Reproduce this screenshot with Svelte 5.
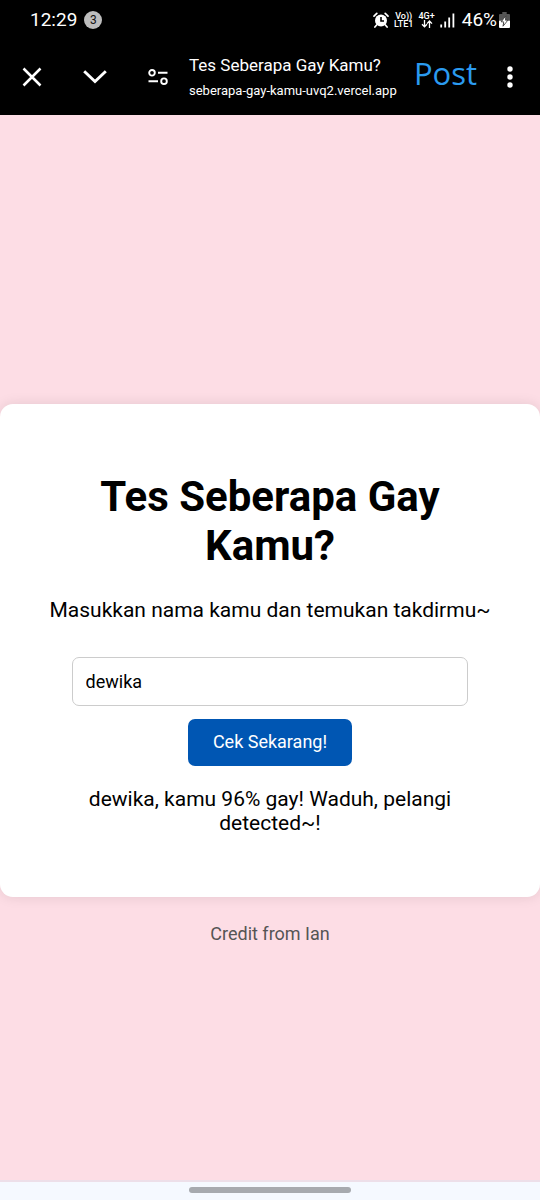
<script>
  let name = $state('dewika');
  let result = $state('dewika, kamu 96% gay! Waduh, pelangi detected~!');

  function check(event) {
    event.preventDefault();
    const who = name.trim();
    if (who) result = `${who}, kamu 96% gay! Waduh, pelangi detected~!`;
  }
</script>

<div class="screen">
  <header>
    <div class="status">
      <span class="clock">12:29</span>
      <span class="count">3</span>
      <div class="signals">
        <svg width="16" height="16" viewBox="0 0 16 16" aria-hidden="true">
          <circle cx="8" cy="8.5" r="6" fill="#fff" />
          <path d="M1 4.2 3.8 1.4M12.2 1.4 15 4.2M3.6 13 1.9 15M12.4 13l1.7 2" stroke="#fff" stroke-width="1.7" stroke-linecap="round" />
          <path d="M8 5v4h3" fill="none" stroke="#000" stroke-width="1.6" />
        </svg>
        <span class="stack"><span>Vo))</span><span>LTE1</span></span>
        <span class="stack">
          <span>4G+</span>
          <svg width="12" height="8" viewBox="0 0 12 8" aria-hidden="true">
            <path d="M3.5 0v6.5M1 4.2l2.5 2.6L6 4.2M8.5 8V1.2M6 3.6 8.5 1 11 3.6" fill="none" stroke="#fff" stroke-width="1.3" />
          </svg>
        </span>
        <svg width="15" height="16" viewBox="0 0 15 16" aria-hidden="true">
          <path d="M1.2 15.5v-3M5.2 15.5v-6M9.2 15.5v-10M13.4 15.5v-14" stroke="#fff" stroke-width="1.8" />
        </svg>
        <span class="percent">46%</span>
        <svg width="11" height="16" viewBox="0 0 11 16" aria-hidden="true">
          <path d="M3.3 0h4.4v2H10a1 1 0 0 1 1 1v5H0V3a1 1 0 0 1 1-1h2.3z" fill="#555" />
          <path d="M0 8.5h11V15a1 1 0 0 1-1 1H1a1 1 0 0 1-1-1z" fill="#fff" />
          <path d="M7 3.8 2.2 9.8h2.6L4 14.2l4.8-6H6.2z" fill="#fff" stroke="#444" stroke-width="1" />
          <path d="M6.4 5.4 3.4 9.2h2.3l-.6 2.8 2.6-3.3H5.5z" fill="#fff" />
        </svg>
      </div>
    </div>

    <div class="toolbar">
      <button class="icon" aria-label="Tutup">
        <svg width="20" height="20" viewBox="0 0 20 20"><path d="m1.5 1.5 17 17M18.500 1.500l-17 17" fill="none" stroke="#fff" stroke-width="2.5" /></svg>
      </button>
      <button class="icon chevron" aria-label="Perkecil">
        <svg width="24" height="14" viewBox="0 0 24 14"><path d="m1.2 1.2 10.8 10.4L22.8 1.2" fill="none" stroke="#fff" stroke-width="2.9" /></svg>
      </button>
      <button class="icon" aria-label="Info situs">
        <svg width="20" height="16" viewBox="0 0 20 16">
          <g fill="none" stroke="#fff" stroke-width="1.9">
            <circle cx="4" cy="3.8" r="2.8" /><path d="M10 3.8h9.500M.5 12.200H10" /><circle cx="16" cy="12.2" r="2.8" />
          </g>
        </svg>
      </button>
      <div class="site">
        <span class="site-title">Tes Seberapa Gay Kamu?</span>
        <span class="site-url">seberapa-gay-kamu-uvq2.vercel.app</span>
      </div>
      <button class="post">Post</button>
      <button class="icon menu" aria-label="Menu">
        <svg width="6" height="22" viewBox="0 0 6 22"><g fill="#fff"><circle cx="3" cy="3" r="2.7" /><circle cx="3" cy="11" r="2.7" /><circle cx="3" cy="19" r="2.7" /></g></svg>
      </button>
    </div>
  </header>

  <main>
    <section class="card">
      <h1>Tes Seberapa Gay Kamu?</h1>
      <p><label for="name">Masukkan nama kamu dan temukan takdirmu~</label></p>
      <form onsubmit={check}>
        <input id="name" type="text" autocomplete="off" bind:value={name} />
        <button class="check" type="submit">Cek Sekarang!</button>
      </form>
      <p class="result">{result}</p>
    </section>
    <footer>Credit from Ian</footer>
  </main>

  <div class="navbar"><span class="handle"></span></div>
</div>

<style>
  :global(body) {
    margin: 0;
  }
  .screen {
    min-height: 100vh;
    display: flex;
    flex-direction: column;
    background: #fddde5;
    color: #000;
    font-family: Roboto, sans-serif;
  }
  button,
  input {
    font-family: inherit;
    box-sizing: border-box;
  }
  svg {
    display: block;
  }
  header {
    background: #000;
    color: #fff;
  }
  .status {
    display: flex;
    align-items: center;
    height: 40px;
    padding: 0 30px;
  }
  .clock,
  .percent {
    font-size: 19px;
    line-height: 24px;
    font-weight: 400;
  }
  .count {
    width: 18px;
    margin-left: 7px;
    border-radius: 50%;
    background: #bdbdbd;
    color: #111;
    font-size: 12px;
    line-height: 18px;
    text-align: center;
  }
  .signals {
    display: flex;
    align-items: center;
    gap: 5px;
    margin-left: auto;
  }
  .stack {
    display: flex;
    flex-direction: column;
    align-items: center;
    font-size: 9px;
    line-height: 8px;
    font-weight: 500;
  }
  .percent {
    margin: 0 -3px 0 2px;
  }
  .toolbar {
    display: flex;
    align-items: center;
    height: 73px;
    padding: 0 27px 2px 22px;
  }
  .icon,
  .post {
    padding: 0;
    border: 0;
    background: none;
    cursor: pointer;
  }
  .chevron {
    margin: 0 41px;
  }
  .site {
    flex: 1;
    min-width: 0;
    display: flex;
    flex-direction: column;
    gap: 6px;
    margin-left: 21px;
    white-space: nowrap;
  }
  .site-title {
    font-size: 17px;
    line-height: 22px;
  }
  .site-url {
    font-size: 13px;
    line-height: 18px;
  }
  .post {
    color: #2b9bf0;
    font-family: "Open Sans", sans-serif;
    font-size: 31px;
    line-height: 40px;
    padding-bottom: 8px;
  }
  .menu {
    margin-left: 30px;
  }
  main {
    flex: 1;
    display: grid;
    grid-template-rows: 1fr auto 1fr;
    padding-top: 5px;
  }
  .card {
    grid-row: 2;
    padding: 68px 47px 62px;
    border-radius: 13px;
    background: #fff;
    box-shadow: 0 0 13px rgba(0, 0, 0, 0.1);
    text-align: center;
  }
  h1 {
    margin: 0 0 28px;
    font-size: 42px;
    line-height: 49px;
    font-weight: 700;
  }
  p {
    margin: 0;
    font-size: 21px;
    line-height: 24px;
  }
  form {
    display: flex;
    flex-direction: column;
    align-items: center;
    gap: 13px;
    margin: 35px 0 21px;
  }
  input {
    width: 89%;
    height: 49px;
    padding: 0 13px;
    border: 1px solid #ccc;
    border-radius: 7px;
    background: #fff;
    color: #000;
    font-size: 18px;
  }
  .check {
    height: 47px;
    padding: 0 25px 1px;
    border: 0;
    border-radius: 7px;
    background: #0056b3;
    color: #fff;
    font-size: 18px;
    cursor: pointer;
  }
  .result {
    padding: 0 26px;
  }
  footer {
    grid-row: 3;
    padding-top: 26px;
    color: #555;
    font-size: 18px;
    line-height: 22px;
    text-align: center;
  }
  .navbar {
    display: flex;
    justify-content: center;
    padding: 5px 0;
    border-top: 2px solid #eddfe9;
    background: #f5f9ff;
  }
  .handle {
    width: 30%;
    height: 6px;
    margin-bottom: 2px;
    border-radius: 3px;
    background: #a7aaaf;
  }
</style>
